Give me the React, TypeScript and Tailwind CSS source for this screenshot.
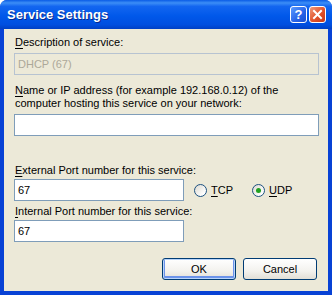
import React from 'react'

const font = { fontFamily: '"Liberation Sans", Arial, sans-serif' }

const Key = ({ children }: { children: React.ReactNode }) => (
  <span className="underline underline-offset-[2px]">{children}</span>
)

const TextBox = ({ value, wide, disabled }: { value?: string; wide?: boolean; disabled?: boolean }) => (
  <div
    className={`h-[22px] flex items-center px-[3px] text-[11px] border ${wide ? 'w-[305px]' : 'w-[170px]'} ${
      disabled ? 'bg-[#ECE9D8] border-[#B7C3D1] text-[#ACA899]' : 'bg-white border-[#7F9DB9] text-black'
    }`}
  >
    {value}
  </div>
)

const Radio = ({ checked, label }: { checked?: boolean; label: React.ReactNode }) => (
  <div className="flex items-center gap-[4px] text-[11px]">
    <div className="w-[13px] h-[13px] rounded-full border border-[#1C5180] bg-[linear-gradient(135deg,#DCD9D0_0%,#FFFFFF_80%)] flex items-center justify-center">
      {checked && <div className="w-[5px] h-[5px] rounded-full bg-[#21A121]" />}
    </div>
    <span>{label}</span>
  </div>
)

const XpButton = ({ children, isDefault }: { children: React.ReactNode; isDefault?: boolean }) => (
  <div
    className={`w-[74px] h-[22px] rounded-[3px] border border-[#003C74] flex items-center justify-center text-[11px] text-black bg-[linear-gradient(to_bottom,#FFFFFF_0%,#F3F2EE_60%,#E2DFD6_100%)] ${
      isDefault ? 'shadow-[inset_0_0_0_1px_#B8D4FA,inset_0_-1px_0_2px_#6C93EA]' : ''
    }`}
  >
    {children}
  </div>
)

export default function App() {
  return (
    <div className="w-[332px] h-[295px] bg-white" style={font}>
      <div className="w-full h-full flex flex-col rounded-t-[7px] overflow-hidden bg-[#0842D5]">
        {/* title bar */}
        <div className="h-[29px] shrink-0 flex items-center justify-between pl-[7px] pr-[6px] bg-[linear-gradient(to_bottom,#0A5CE6_0%,#3C8EF6_10%,#1366F0_22%,#0058EA_55%,#004FE0_85%,#0040C4_100%)]">
          <span className="text-[13px] font-bold text-white [text-shadow:1px_1px_0_#0A2A8C]">Service Settings</span>
          <div className="flex items-center gap-[2px]">
            <div className="w-[17px] h-[17px] rounded-[3px] border border-white bg-[linear-gradient(135deg,#5A9BFF_0%,#2663E8_60%,#1A4FD0_100%)] flex items-center justify-center text-white text-[13px] font-bold leading-none">
              ?
            </div>
            <div className="w-[17px] h-[17px] rounded-[3px] border border-white bg-[linear-gradient(135deg,#F09A7A_0%,#E1512A_55%,#C5381A_100%)] flex items-center justify-center">
              <svg width="11" height="11" viewBox="0 0 11 11">
                <path d="M2 2 L9 9 M9 2 L2 9" stroke="white" strokeWidth="2" strokeLinecap="square" />
              </svg>
            </div>
          </div>
        </div>

        {/* client area */}
        <div className="flex-1 mx-[4px] mb-[4px] bg-[#ECE9D8] flex flex-col pl-[10px] pr-[9px] pt-[7px] text-[11px] leading-[13px] text-black">
          <div className="pl-px"><Key>D</Key>escription of service:</div>
          <div className="mt-[4px]"><TextBox value="DHCP (67)" wide disabled /></div>

          <div className="mt-[9px] pl-px">
            <Key>N</Key>ame or IP address (for example 192.168.0.12) of the
            <br />
            computer hosting this service on your network:
          </div>
          <div className="mt-[4px]"><TextBox wide /></div>

          <div className="mt-[28px] pl-px"><Key>E</Key>xternal Port number for this service:</div>
          <div className="mt-[2px] flex items-center">
            <TextBox value="67" />
            <div className="ml-[10px] w-[58px]"><Radio label={<><Key>T</Key>CP</>} /></div>
            <Radio checked label={<><Key>U</Key>DP</>} />
          </div>

          <div className="mt-[4px] pl-px"><Key>I</Key>nternal Port number for this service:</div>
          <div className="mt-[2px]"><TextBox value="67" /></div>

          <div className="mt-[16px] flex justify-end gap-[7px] pr-[2px]">
            <XpButton isDefault>OK</XpButton>
            <XpButton>Cancel</XpButton>
          </div>
        </div>
      </div>
    </div>
  )
}
